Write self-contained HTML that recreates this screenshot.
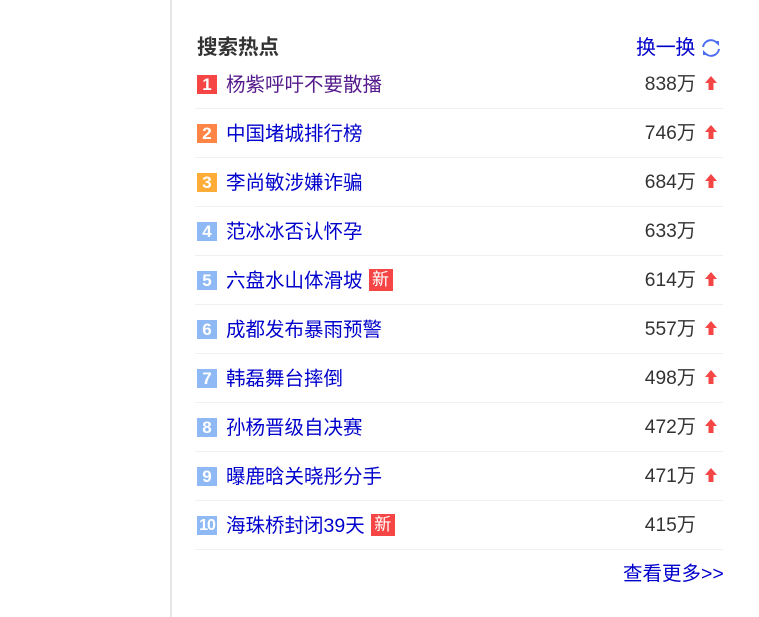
<!DOCTYPE html>
<html><head><meta charset="utf-8"><style>
*{margin:0;padding:0;box-sizing:border-box}
body{width:759px;height:617px;background:#fff;position:relative;overflow:hidden;font-family:"Liberation Sans","Noto Sans CJK SC",sans-serif}
.vl{position:absolute;left:170px;top:0;width:2px;height:617px;background:#e6e6e6}
.title{position:absolute;left:197px;top:36px;font-size:20.5px;font-weight:bold;color:#333;line-height:24px}
.chg{position:absolute;left:636px;top:36px;font-size:20px;color:#0000cc;line-height:24px;letter-spacing:-0.3px}
.chg svg{position:absolute;left:64px;top:2px}
.row{position:absolute;left:195px;width:528px;height:49px;border-bottom:1px solid #f0f0f0}
.b{position:absolute;left:2px;top:15px;width:20px;height:19px;color:#fff;font-size:17px;font-weight:bold;line-height:19px;text-align:center}
.t{position:absolute;left:31px;top:13px;font-size:19.5px;line-height:24px;color:#0000cc;white-space:nowrap}
.n{position:absolute;right:27px;top:13px;font-size:19.2px;line-height:24px;color:#333}
.new{display:inline-block;width:24px;height:22px;background:#f54545;color:#fff;font-size:17px;line-height:22px;text-align:center;vertical-align:top;margin-left:6px;margin-top:0px}
.ar{position:absolute;right:6px;top:16px}
.more{position:absolute;left:623px;top:562px;font-size:19.5px;color:#0000cc;line-height:24px}
</style></head><body>
<div class="vl"></div>
<div class="title">搜索热点</div>
<div class="chg">换一换<svg width="22" height="20" viewBox="0 0 22 20"><path d="M3 9 A8 8 0 0 1 17 5" fill="none" stroke="#4e6ef2" stroke-width="2"/><path d="M14 3 L19 3 L19 8 Z" fill="#4e6ef2"/><path d="M19 11 A8 8 0 0 1 5 15" fill="none" stroke="#4e6ef2" stroke-width="2"/><path d="M8 17 L3 17 L3 12 Z" fill="#4e6ef2"/></svg></div>

<div class="row" style="top:60px"><div class="b" style="background:#f54545">1</div><div class="t" style="color:#551a8b">杨紫呼吁不要散播</div><div class="n">838万</div><svg class="ar" width="12" height="14" viewBox="0 0 12 14"><path d="M6 0 L12 7 L8.5 7 L8.5 14 L3.5 14 L3.5 7 L0 7Z" fill="#f54545"/></svg></div>
<div class="row" style="top:109px"><div class="b" style="background:#ff8547">2</div><div class="t">中国堵城排行榜</div><div class="n">746万</div><svg class="ar" width="12" height="14" viewBox="0 0 12 14"><path d="M6 0 L12 7 L8.5 7 L8.5 14 L3.5 14 L3.5 7 L0 7Z" fill="#f54545"/></svg></div>
<div class="row" style="top:158px"><div class="b" style="background:#ffac38">3</div><div class="t">李尚敏涉嫌诈骗</div><div class="n">684万</div><svg class="ar" width="12" height="14" viewBox="0 0 12 14"><path d="M6 0 L12 7 L8.5 7 L8.5 14 L3.5 14 L3.5 7 L0 7Z" fill="#f54545"/></svg></div>
<div class="row" style="top:207px"><div class="b" style="background:#8eb9f5">4</div><div class="t">范冰冰否认怀孕</div><div class="n">633万</div></div>
<div class="row" style="top:256px"><div class="b" style="background:#8eb9f5">5</div><div class="t">六盘水山体滑坡<span class="new">新</span></div><div class="n">614万</div><svg class="ar" width="12" height="14" viewBox="0 0 12 14"><path d="M6 0 L12 7 L8.5 7 L8.5 14 L3.5 14 L3.5 7 L0 7Z" fill="#f54545"/></svg></div>
<div class="row" style="top:305px"><div class="b" style="background:#8eb9f5">6</div><div class="t">成都发布暴雨预警</div><div class="n">557万</div><svg class="ar" width="12" height="14" viewBox="0 0 12 14"><path d="M6 0 L12 7 L8.5 7 L8.5 14 L3.5 14 L3.5 7 L0 7Z" fill="#f54545"/></svg></div>
<div class="row" style="top:354px"><div class="b" style="background:#8eb9f5">7</div><div class="t">韩磊舞台摔倒</div><div class="n">498万</div><svg class="ar" width="12" height="14" viewBox="0 0 12 14"><path d="M6 0 L12 7 L8.5 7 L8.5 14 L3.5 14 L3.5 7 L0 7Z" fill="#f54545"/></svg></div>
<div class="row" style="top:403px"><div class="b" style="background:#8eb9f5">8</div><div class="t">孙杨晋级自决赛</div><div class="n">472万</div><svg class="ar" width="12" height="14" viewBox="0 0 12 14"><path d="M6 0 L12 7 L8.5 7 L8.5 14 L3.5 14 L3.5 7 L0 7Z" fill="#f54545"/></svg></div>
<div class="row" style="top:452px"><div class="b" style="background:#8eb9f5">9</div><div class="t">曝鹿晗关晓彤分手</div><div class="n">471万</div><svg class="ar" width="12" height="14" viewBox="0 0 12 14"><path d="M6 0 L12 7 L8.5 7 L8.5 14 L3.5 14 L3.5 7 L0 7Z" fill="#f54545"/></svg></div>
<div class="row" style="top:501px"><div class="b" style="background:#8eb9f5;font-size:16px;letter-spacing:-1px">10</div><div class="t">海珠桥封闭39天<span class="new">新</span></div><div class="n">415万</div></div>
<div class="more">查看更多&gt;&gt;</div>
</body></html>
